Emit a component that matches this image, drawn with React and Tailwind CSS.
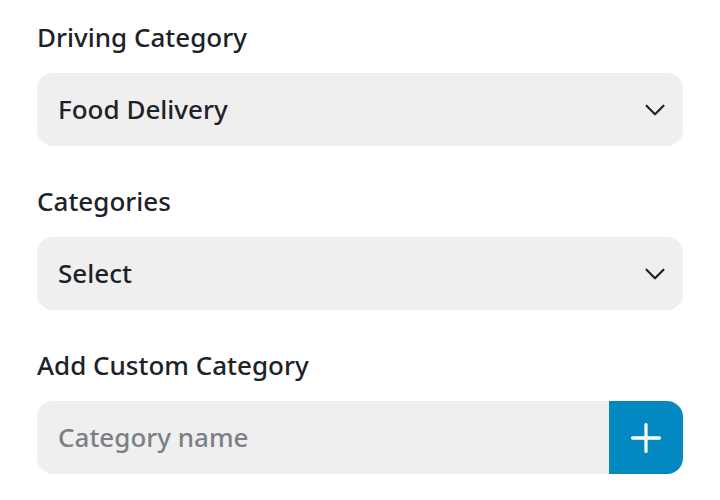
import { ChevronDown, Plus } from "lucide-react";

function Label({ children }) {
  return <p className="text-[26px] leading-[32px] font-[550] text-[#1c2328]">{children}</p>;
}

function SelectBox({ value }) {
  return (
    <div className="mt-[20px] h-[73px] rounded-[16px] bg-[#efefef] flex items-center justify-between pl-[21px] pr-[11px]">
      <span className="text-[26px] font-[550] text-[#1c2328]">{value}</span>
      <ChevronDown className="size-[34px] text-[#1c2328]" strokeWidth={1.5} />
    </div>
  );
}

export default function App() {
  return (
    <div
      className="w-[720px] h-[500px] bg-white px-[37px] pt-[21px]"
      style={{ fontFamily: '"Noto Sans", "Open Sans", sans-serif' }}
    >
      <Label>Driving Category</Label>
      <SelectBox value="Food Delivery" />

      <div className="mt-[39px]">
        <Label>Categories</Label>
        <SelectBox value="Select" />
      </div>

      <div className="mt-[39px]">
        <Label>Add Custom Category</Label>
        <div className="mt-[20px] h-[73px] rounded-[16px] bg-[#efefef] flex overflow-hidden">
          <input
            className="flex-1 min-w-0 bg-transparent outline-none pl-[21px] text-[26px] font-[550] text-[#1c2328] placeholder:text-[#7b8085]"
            placeholder="Category name"
          />
          <button className="w-[74px] bg-[#0388c2] flex items-center justify-center">
            <Plus className="size-[46px] text-white" strokeWidth={1.7} />
          </button>
        </div>
      </div>
    </div>
  );
}
